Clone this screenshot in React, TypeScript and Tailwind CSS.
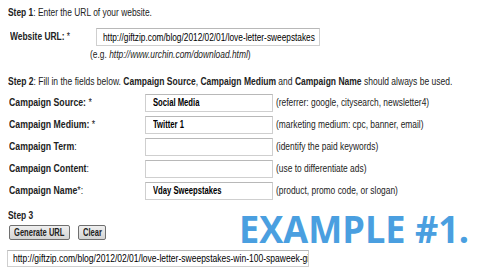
// text in the shot is horizontally squeezed, so glyphs get a scale-x
function T({ children, className = 'scale-x-[0.8]' }: { children: React.ReactNode; className?: string }) {
  return <span className={`inline-block origin-left whitespace-nowrap ${className}`}>{children}</span>;
}

export default function App() {
  const rows = [
    { label: 'Campaign Source:', req: ' *', value: 'Social Media', hint: '(referrer: google, citysearch, newsletter4)' },
    { label: 'Campaign Medium:', req: ' *', value: 'Twitter 1', hint: '(marketing medium: cpc, banner, email)' },
    { label: 'Campaign Term', req: ':', value: '', hint: '(identify the paid keywords)' },
    { label: 'Campaign Content', req: ':', value: '', hint: '(use to differentiate ads)' },
    { label: 'Campaign Name', req: '*:', value: 'Vday Sweepstakes', hint: '(product, promo code, or slogan)' },
  ];

  return (
    <div className="w-[477px] h-[276px] bg-white overflow-hidden relative font-['Liberation_Sans',Arial,sans-serif] text-[10.5px] text-[#222]">
      {/* Step 1 */}
      <div className="pl-2 pt-[6px] leading-[13px]">
        <T>
          <span className="font-bold">Step 1</span>: Enter the URL of your website.
        </T>
      </div>
      <div className="flex items-center pl-[10px] mt-[9px]">
        <div className="w-[86px] font-bold">
          <T>
            Website URL: <span className="font-normal">*</span>
          </T>
        </div>
        <div className="w-[224px] h-[18px] border border-[#cfcfcf] border-t-[#b8b8b8] pl-[6px] flex items-center text-[11px] text-black overflow-hidden">
          <T className="scale-x-[0.755]">http://giftzip.com/blog/2012/02/01/love-letter-sweepstakes</T>
        </div>
      </div>
      <div className="pl-[90px] mt-[1px] leading-[14px]">
        <T>
          (e.g. <i>http://www.urchin.com/download.html</i>)
        </T>
      </div>

      {/* Step 2 */}
      <div className="pl-2 mt-[14px] leading-[13px]">
        <T className="scale-x-[0.81]">
          <span className="font-bold">Step 2</span>: Fill in the fields below. <b>Campaign Source</b>, <b>Campaign Medium</b> and{' '}
          <b>Campaign Name</b> should always be used.
        </T>
      </div>
      <div className="flex flex-col gap-[4px] mt-[6px] pl-[9px]">
        {rows.map((r) => (
          <div key={r.label} className="flex items-center h-[18px]">
            <div className="w-[136px] font-bold">
              <T className="scale-x-[0.83]">
                {r.label}
                <span className="font-normal">{r.req}</span>
              </T>
            </div>
            <div className="w-[128px] h-[18px] border border-[#cfcfcf] border-t-[#b8b8b8] pl-[7px] flex items-center font-bold text-black overflow-hidden">
              <T className="scale-x-[0.73]">{r.value}</T>
            </div>
            <div className="pl-[3px]">
              <T>{r.hint}</T>
            </div>
          </div>
        ))}
      </div>

      {/* Step 3 */}
      <div className="pl-2 mt-[9px] font-bold leading-[13px]">
        <T>Step 3</T>
      </div>
      <div className="flex gap-[8px] pl-[9px] mt-[3px]">
        <button className="w-[61px] h-[15px] pl-[4px] flex items-center border border-[#6f6f6f] rounded-[2px] bg-gradient-to-b from-[#efefef] to-[#d4d4d4] font-bold leading-[13px] text-[#222]">
          <T className="scale-x-[0.72]">Generate URL</T>
        </button>
        <button className="w-[28px] h-[15px] pl-[4px] flex items-center border border-[#6f6f6f] rounded-[2px] bg-gradient-to-b from-[#efefef] to-[#d4d4d4] font-bold leading-[13px] text-[#222]">
          <T className="scale-x-[0.72]">Clear</T>
        </button>
      </div>
      <div className="ml-[7px] mt-[10px] w-[302px] h-[17px] border border-[#cfcfcf] border-t-[#b8b8b8] pl-[5px] flex items-center overflow-hidden text-[11px] text-black">
        <T className="scale-x-[0.775]">http://giftzip.com/blog/2012/02/01/love-letter-sweepstakes-win-100-spaweek-gift-card</T>
      </div>

      <div className="absolute left-[239px] top-[205px] whitespace-nowrap font-['Open_Sans',sans-serif] font-bold text-[38px] leading-[46px] text-[#4a9fe0] origin-left scale-x-[0.95]">
        EXAMPLE #1.
      </div>
    </div>
  );
}
